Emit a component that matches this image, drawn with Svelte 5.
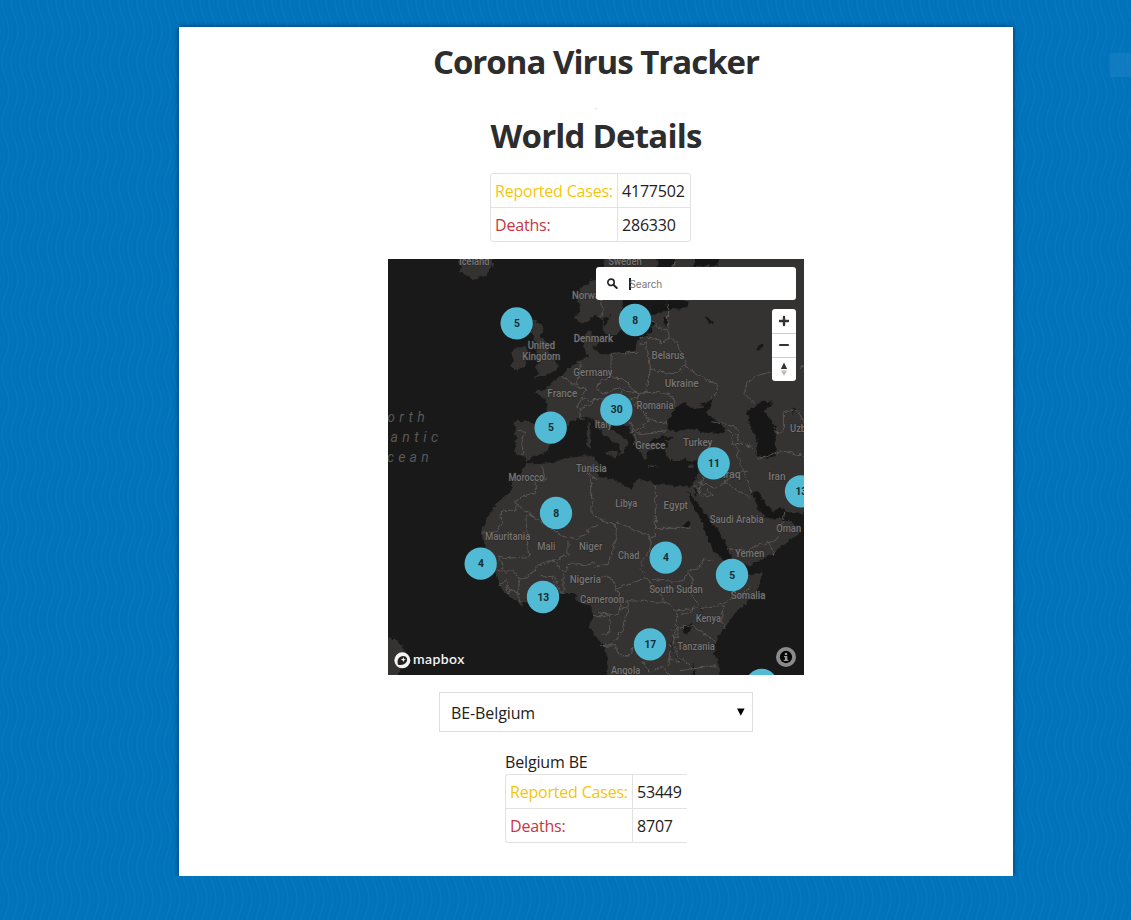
<script>
  const world = [
    { label: 'Reported Cases:', value: '4177502', kind: 'cases' },
    { label: 'Deaths:', value: '286330', kind: 'deaths' }
  ];
  const country = [
    { label: 'Reported Cases:', value: '53449', kind: 'cases' },
    { label: 'Deaths:', value: '8707', kind: 'deaths' }
  ];

  // Map units are thirds of a pixel: text, centre x, baseline, width
  const labels = [
    ['Iceland', 259, 17, 92], ['Sweden', 711, 17, 101], ['Norway', 601, 121, 98],
    ['United', 460, 269, 82], ['Kingdom', 460, 302, 114], ['Denmark', 616, 248, 118],
    ['Germany', 615, 350, 118], ['France', 523, 413, 90], ['Belarus', 840, 299, 99],
    ['Ukraine', 881, 384, 102], ['Romania', 801, 449, 111], ['Italy', 646, 507, 52],
    ['Greece', 787, 571, 90], ['Turkey', 929, 562, 88], ['Uzbekistan', 1276, 519, 140],
    ['Tunisia', 610, 640, 92], ['Morocco', 415, 666, 107], ['Iraq', 1031, 656, 54],
    ['Iran', 1167, 663, 52], ['Libya', 715, 743, 66], ['Egypt', 863, 750, 73],
    ['Saudi Arabia', 1046, 792, 162], ['Oman', 1202, 820, 75], ['Mauritania', 359, 842, 136],
    ['Mali', 475, 873, 54], ['Niger', 608, 873, 70], ['Chad', 722, 900, 64],
    ['Yemen', 1085, 893, 88], ['Nigeria', 592, 973, 94], ['South Sudan', 864, 1003, 161],
    ['Cameroon', 642, 1033, 132], ['Somalia', 1080, 1021, 104], ['Kenya', 961, 1088, 76],
    ['Tanzania', 924, 1172, 113], ['Angola', 713, 1246, 88]
  ];
  const clusters = [
    [386, 193, 5], [741, 183, 8], [488, 506, 5], [685, 452, 30], [977, 613, 11],
    [1239, 697, 13], [504, 762, 8], [278, 914, 4], [465, 1014, 13], [833, 896, 4],
    [1032, 948, 5], [786, 1156, 17], [1121, 1278, '']
  ];
  const borders = [
    // Scandinavia, Baltics and eastern Europe
    'M641 125L645 155L636 176M863 0L858 24M838 125L840 240M785 185L810 200L825 215L838 210M755 235L795 236L818 250L843 240L870 250L878 280L898 305L890 320L870 345L840 342L788 330M755 260L772 252L780 280L788 330L780 360L773 400L752 405L738 395L706 360L668 355L670 285M670 283L750 280M668 352L640 365L625 390L648 402L692 390L720 397L750 405M890 320L920 340L950 360L989 376L985 405L968 420M773 400L825 402L850 410L862 440M752 405L742 440L765 455L780 482L838 490M618 425L650 418L702 400M722 420L745 418M730 493L742 510L760 512L770 490M740 515L752 525L775 522L835 515M742 525L740 560M722 490L742 510L730 520',
    // Western Europe
    'M578 310L572 350L565 375M525 348L542 370L555 375L565 380L595 390L585 415L568 440L580 448L606 437L620 425M578 448L575 480L590 480M578 415L605 425L630 420M384 513L410 517L402 550L405 588',
    // Caucasus and central Asia
    'M970 488L1040 500L1060 525M1006 510L1045 528L1060 550L1095 570M1030 525L1035 555L1065 560M1045 555L1050 590L1060 618L1072 648L1090 700M1110 600L1145 590L1180 575L1248 590M1145 340L1105 350L1075 375L1070 405L1100 435M1155 505L1170 520L1186 522M1186 520L1186 460L1212 450L1235 465L1248 490M1145 340L1170 332L1200 345M1235 332L1248 322',
    // North and west Africa
    'M463 620L472 665L445 670L445 700L405 710L384 724L384 754L340 754L340 790L328 818L282 822M384 736L525 832L565 842L630 795M413 768L422 893L350 899L325 890M422 768L445 773M540 848L540 890L495 904L450 918L425 950L395 960L392 990L385 1000L358 985M495 903L515 925L535 940L540 920L550 912L590 920L625 910M525 940L525 1005M455 953L500 952L520 1005M492 954L510 1004M325 935L378 936L395 960M333 895L345 930M330 975L355 965L358 1000L380 995L392 1000L398 1032M588 618L610 660L612 765L625 775L680 800L688 790L790 835L802 833L802 675M802 808L905 808M680 795L688 830L660 915L618 925M590 620L606 640L620 660L632 655',
    // Central and eastern Africa
    'M790 835L788 870L768 895L755 930L775 955L835 1030L865 1055L940 1045L990 1040L1010 1030L1068 1002L1085 985M775 955L720 978L685 990L672 960L640 950M685 990L700 1030L690 1070L625 1060M700 1050L720 1045L720 1025L835 1030M720 1045L705 1115L670 1155L640 1160M645 1162L680 1160L695 1190L730 1190L735 1160M795 965L830 960L845 970L885 965L900 935L915 965L905 1000L930 1035M905 935L935 925L950 900L970 905M1005 1040L1000 1090L1012 1110M868 1060L865 1100L855 1140L865 1180L880 1200L910 1220M865 1105L915 1100L985 1150M860 1070L910 1060L915 1040M850 1110L870 1110L870 1135L850 1135M845 1200L880 1210M875 1235L985 1220M765 1210L785 1240L825 1225L845 1248M615 1070L665 1070L665 1120L640 1130M845 1155L843 1225',
    // Middle East
    'M945 650L935 700M930 670L965 680L985 690L1010 670L1055 700L1085 715M955 690L970 710L940 700M1010 670L1050 640L1080 640M920 680L945 720M1020 870L1080 875L1105 860L1145 850L1170 840L1185 790L1190 760M1145 850L1155 885'
  ];
</script>

<svg class="backdrop" width="1131" height="920" aria-hidden="true">
  <defs>
    <pattern id="waves" width="9" height="62" patternUnits="userSpaceOnUse">
      <rect width="9" height="62" fill="#0073ba" />
      <g fill="none" stroke="#0578bf" stroke-width="1.4">
        <path d="M-7 0C-7 14 0 18 0 31S-7 48 -7 62M2 0C2 14 9 18 9 31S2 48 2 62M11 0C11 14 18 18 18 31S11 48 11 62" />
        <path d="M-3 0C-3 14 4 18 4 31S-3 48 -3 62M6 0C6 14 13 18 13 31S6 48 6 62" stroke="#0275bc" />
      </g>
    </pattern>
  </defs>
  <rect width="1131" height="920" fill="url(#waves)" />
  <rect x="1110" y="53" width="21" height="24" fill="#1a80c5" opacity=".65" />
</svg>

<main class="card">
  <h1 class="title">Corona Virus Tracker</h1>
  <div class="dot">.</div>
  <h1 class="subtitle">World Details</h1>

  <table class="stats world">
    <tbody>
      {#each world as row}
        <tr><td class={row.kind}>{row.label}</td><td>{row.value}</td></tr>
      {/each}
    </tbody>
  </table>

  <section class="map">
    <svg class="canvas" width="416" height="416" viewBox="0 0 1248 1248">
      <defs>
        <filter id="coast" x="0" y="0" width="1248" height="1248" filterUnits="userSpaceOnUse">
          <feTurbulence type="fractalNoise" baseFrequency=".06" numOctaves="3" seed="4" />
          <feDisplacementMap in="SourceGraphic" scale="17" xChannelSelector="R" yChannelSelector="G" />
        </filter>
      </defs>
      <rect width="1248" height="1248" fill="#191919" />
      <g filter="url(#coast)" fill="#343332">
        <path d="M210 -10L218 40L255 60L292 50L318 20L316 -10Z" />
        <path d="M655 -10L640 35L621 60L581 85L571 110L576 150L563 175L576 195L601 185L626 165L641 185L651 225L671 235L691 225L704 195L712 120L820 60L820 -10Z" />
        <path d="M591 270L586 245L598 215L611 215L610 240L616 270L636 285L671 287L711 280L741 275L748 240L776 230L791 200L786 170L846 155L880 130L850 110L800 80L810 -10L1260 -10L1260 765L1190 755L1172 762L1182 785L1208 787L1238 813L1208 843L1150 885L1080 920L1020 920L1070 948L1126 940L1118 970L1098 1008L1038 1068L990 1133L978 1183L995 1223L993 1260L655 1260L662 1200L650 1165L618 1125L605 1105L615 1070L614 1045L575 1030L555 1005L525 1005L440 1017L398 1036L350 1003L325 955L295 895L288 850L278 820L290 790L325 733L368 700L370 670L395 650L415 612L460 615L500 608L540 595L590 588L618 593L632 615L622 640L636 655L675 660L705 680L735 690L748 658L800 672L856 682L900 682L924 665L932 625L932 600L910 610L890 600L865 605L840 598L830 575L842 552L826 535L800 538L781 555L791 573L778 580L780 600L766 598L755 573L741 555L736 535L720 505L690 480L655 485L665 510L700 530L724 550L712 560L708 583L690 592L697 573L690 555L650 530L630 508L616 480L590 472L545 490L530 520L490 550L475 580L440 595L415 603L400 590L378 580L386 530L380 510L385 485L440 490L483 482L478 445L470 418L450 410L445 400L475 388L500 362L525 347L545 325L580 302L601 296Z" />
        <path d="M435 180L450 190L466 208L458 235L478 250L485 290L510 315L502 340L470 350L435 360L453 340L440 325L455 310L445 280L448 250L430 220Z" />
        <path d="M390 265L415 265L418 300L412 322L380 334L368 322L378 305L370 280Z" />
        <path d="M600 480L608 500L606 565L597 560L596 520ZM650 577L692 575L680 598ZM615 235L632 245L622 265L610 255ZM-10 1130L30 1150L55 1175L45 1220L20 1260L-10 1260Z" />
        <path d="M780 618L813 621L810 625L780 623ZM900 622L920 617L908 630Z" />
      </g>
      <g filter="url(#coast)" fill="#191919">
        <path d="M808 -10L855 -10L865 8L850 24L808 24ZM918 -10L990 -10L992 22L918 22ZM705 125L755 127L745 160L700 170Z" />
        <path d="M786 142L825 130L903 125L898 145L858 150L800 165ZM783 190L796 192L790 220L780 225ZM647 170L660 178L653 203L645 195ZM668 160L672 172L662 180ZM828 172L838 180L834 202L826 190ZM950 170L965 180L980 190L970 198L955 188Z" />
        <path d="M888 430L918 450L948 445L933 435L978 422L963 450L953 462L993 490L1013 510L998 525L948 522L908 505L868 520L838 512L843 480L863 445Z" />
        <path d="M1118 430L1148 425L1155 440L1128 455L1148 480L1163 505L1163 590L1138 600L1103 585L1108 540L1083 490L1076 455Z" />
        <path d="M893 688L905 705L935 740L968 785L1000 835L1025 875L1032 905L995 897L970 865L955 830L940 780L915 740ZM918 685L930 700L922 714Z" />
        <path d="M1093 696L1115 702L1130 733L1155 755L1182 745L1190 770L1170 778L1140 780L1110 750Z" />
        <path d="M1103 275L1112 260L1127 257L1122 266ZM1215 445L1226 452L1212 466ZM880 806L905 785L903 803ZM885 1105L913 1088L910 1115L890 1127ZM938 1037L946 1055L937 1053ZM850 1140L855 1175L882 1208L871 1200L848 1160ZM915 1210L922 1248L914 1248ZM822 532L855 534L840 543L818 540Z" />
      </g>
      <g class="borders" filter="url(#coast)">
        {#each borders as d}<path {d} />{/each}
      </g>
      <g class="places">
        {#each labels as [name, x, y, w]}
          <text {x} {y} textLength={w} lengthAdjust="spacingAndGlyphs">{name}</text>
        {/each}
      </g>
      <g class="ocean">
        <text x="-44" y="490" textLength="154">North</text>
        <text x="-82" y="550" textLength="232">Atlantic</text>
        <text x="-44" y="609" textLength="166">Ocean</text>
      </g>
      {#each clusters as [x, y, n]}
        <circle cx={x} cy={y} r="48.5" fill="#51bbd6" />
        <text class="count" x={x + 1} y={y + 11}>{n}</text>
      {/each}
      <g transform="translate(43 1204)">
        <circle r="24" fill="#f4f4f4" />
        <path d="M-13 13C-17-1-10-13 3-13C15-13 18 1 10 8C5 13-3 15-13 13Z" fill="#222" />
        <path d="M3-10L5-4L11-2L5 0L3 6L1 0L-5-2L1-4Z" fill="#fff" />
      </g>
      <text class="brand" x="75" y="1216" textLength="154">mapbox</text>
      <g transform="translate(1194 1194)">
        <circle r="30" fill="#8b8b8b" />
        <circle r="18.5" fill="#050505" />
        <circle cy="-9" r="4" fill="#999" />
        <path d="M-6-3H4V8H7V12H-7V8H-3V1H-6Z" fill="#999" />
      </g>
    </svg>

    <div class="search">
      <svg width="12" height="12" viewBox="0 0 12 12"><circle cx="4" cy="4.3" r="3.2" fill="none" stroke="#222" stroke-width="1.6" /><path d="M6.6 7L9.8 10" stroke="#222" stroke-width="2" stroke-linecap="round" /></svg>
      <span class="caret"></span><span class="placeholder">Search</span>
    </div>

    <div class="zoom">
      <div><svg width="24" height="24"><path d="M12 8V16M8 12H16" stroke="#333" stroke-width="2.4" stroke-linecap="round" /></svg></div>
      <div><svg width="24" height="24"><path d="M8 11H16" stroke="#333" stroke-width="2.2" stroke-linecap="round" /></svg></div>
      <div><svg width="24" height="24"><path d="M12 4.5L15.2 11H8.8Z" fill="#333" /><path d="M12 18L15 12.5H9Z" fill="#bbb" /></svg></div>
    </div>
  </section>

  <div class="select"><span>BE-Belgium</span><svg width="8" height="8"><path d="M0 .5H7.6L3.8 7.8Z" fill="#000" /></svg></div>

  <div class="country">
    <div class="name">Belgium BE</div>
    <table class="stats local">
      <tbody>
        {#each country as row}
          <tr><td class={row.kind}>{row.label}</td><td>{row.value}</td></tr>
        {/each}
      </tbody>
    </table>
  </div>
</main>

<style>
  :global(body) { margin: 0; background: #0073ba; overflow: hidden; }
  .backdrop { position: absolute; inset: 0; z-index: -1; display: block; }
  .card {
    box-sizing: border-box; width: 834px; height: 849px; margin: 27px 0 0 179px;
    background: #fff; box-shadow: 0 0 5px rgba(0, 20, 50, .65);
    display: flex; flex-direction: column; align-items: center;
    font-family: "Open Sans", "Noto Sans", sans-serif; font-size: 16px; color: #212121;
  }
  h1 { margin: 0; font-size: 33px; line-height: 44px; font-weight: 700; color: #2d2d2d; white-space: nowrap; }
  .title { margin-top: 13px; letter-spacing: -1px; }
  .dot { height: 30px; font-size: 7px; line-height: 46px; color: #999; }
  .subtitle { letter-spacing: -.8px; }
  .stats { border-collapse: separate; border-spacing: 0; table-layout: fixed; border: 1px solid #e2e2e2; border-radius: 3px; }
  .stats td { box-sizing: border-box; height: 34px; padding: 0 0 0 4px; line-height: 32px; white-space: nowrap; letter-spacing: -.2px; }
  .stats td:first-child { width: 127px; border-right: 1px solid #e2e2e2; }
  .stats tr:first-child td { border-bottom: 1px solid #e2e2e2; }
  .stats tr:last-child td { height: 33px; }
  .stats .cases { color: #f4c60c; }
  .stats .deaths { color: #c9353f; }
  .world { width: 201px; margin: 15px 11px 0 0; }
  .map { position: relative; width: 416px; height: 416px; margin-top: 17px; overflow: hidden; font-family: Roboto, sans-serif; }
  .canvas { display: block; }
  .borders { fill: none; stroke: #62605d; stroke-width: 2.4; stroke-linejoin: round; }
  .places { font: 500 31px Roboto, sans-serif; fill: #777573; text-anchor: middle; stroke: #292827; stroke-width: 3; paint-order: stroke; }
  .ocean { font: italic 400 42px Roboto, sans-serif; fill: #585858; }
  .count { font: 700 31px "Roboto", sans-serif; fill: #142c33; text-anchor: middle; }
  .brand { font: 600 42px Lato, sans-serif; fill: #f2f2f2; }
  .search {
    position: absolute; left: 208px; top: 8px; width: 200px; height: 33px; box-sizing: border-box;
    padding-left: 11px; display: flex; align-items: center; background: #fff; border-radius: 3px;
  }
  .caret { width: 1.5px; height: 12px; margin-left: 10px; background: #222; }
  .placeholder { font-family: Inter, sans-serif; font-size: 10px; color: #777; margin-left: -1px; letter-spacing: -.1px; }
  .zoom { position: absolute; right: 8px; top: 50px; width: 24px; height: 72px; background: #fff; border-radius: 3px; }
  .zoom div { height: 24px; box-sizing: border-box; }
  .zoom div + div { border-top: 1px solid #ccc; }
  .zoom svg { display: block; }
  .select {
    box-sizing: border-box; width: 314px; height: 40px; margin-top: 17px; padding: 0 7px 0 11px;
    display: flex; align-items: center; justify-content: space-between; border: 1px solid #dedede; letter-spacing: -.1px;
  }
  .select span { padding-top: 2px; }
  .country { width: 182px; margin-top: 18px; }
  .name { height: 24px; line-height: 24px; letter-spacing: -.15px; }
  .local { width: 182px; border-right: 0; border-radius: 3px 0 0 3px; }
</style>
